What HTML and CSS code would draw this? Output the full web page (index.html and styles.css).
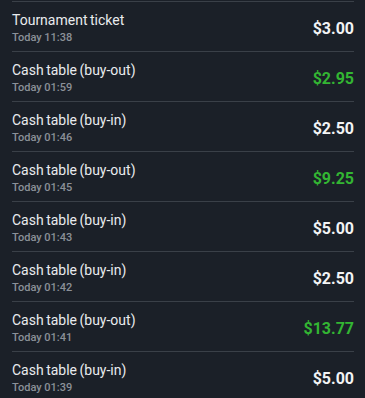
FILE: index.html
```html
<!DOCTYPE html>
<html>
<head>
<meta charset="utf-8">
<link rel="stylesheet" href="styles.css">
</head>
<body>
<div class="list">
  <div class="row"><div class="info"><div class="title">Tournament ticket</div><div class="time">Today 11:38</div></div><div class="amount">$3.00</div></div>
  <div class="row"><div class="info"><div class="title">Cash table (buy-out)</div><div class="time">Today 01:59</div></div><div class="amount green">$2.95</div></div>
  <div class="row"><div class="info"><div class="title">Cash table (buy-in)</div><div class="time">Today 01:46</div></div><div class="amount">$2.50</div></div>
  <div class="row"><div class="info"><div class="title">Cash table (buy-out)</div><div class="time">Today 01:45</div></div><div class="amount green">$9.25</div></div>
  <div class="row"><div class="info"><div class="title">Cash table (buy-in)</div><div class="time">Today 01:43</div></div><div class="amount">$5.00</div></div>
  <div class="row"><div class="info"><div class="title">Cash table (buy-in)</div><div class="time">Today 01:42</div></div><div class="amount">$2.50</div></div>
  <div class="row"><div class="info"><div class="title">Cash table (buy-out)</div><div class="time">Today 01:41</div></div><div class="amount green">$13.77</div></div>
  <div class="row"><div class="info"><div class="title">Cash table (buy-in)</div><div class="time">Today 01:39</div></div><div class="amount">$5.00</div></div>
</div>
</body>
</html>
```
FILE: styles.css
```css
html, body {
  margin: 0;
  padding: 0;
  background: #1b2028;
  height: 100%;
  overflow: hidden;
}
body {
  font-family: Roboto, "Liberation Sans", sans-serif;
}
.list {
  padding-top: 1px;
}
.row {
  margin: 0 11px 0 12px;
  border-top: 1px solid #3a4048;
  display: flex;
  justify-content: space-between;
  align-items: center;
  padding: 9px 0 6px;
}
.title {
  font-size: 14px;
  line-height: 18px;
  color: #e9ebee;
  word-spacing: -1px;
}
.time {
  margin-top: 2px;
  font-size: 11px;
  line-height: 14px;
  font-weight: 500;
  color: #8b9098;
}
.amount {
  font-size: 16px;
  font-weight: 700;
  color: #f2f3f5;
}
.amount.green {
  color: #33b533;
}
```
